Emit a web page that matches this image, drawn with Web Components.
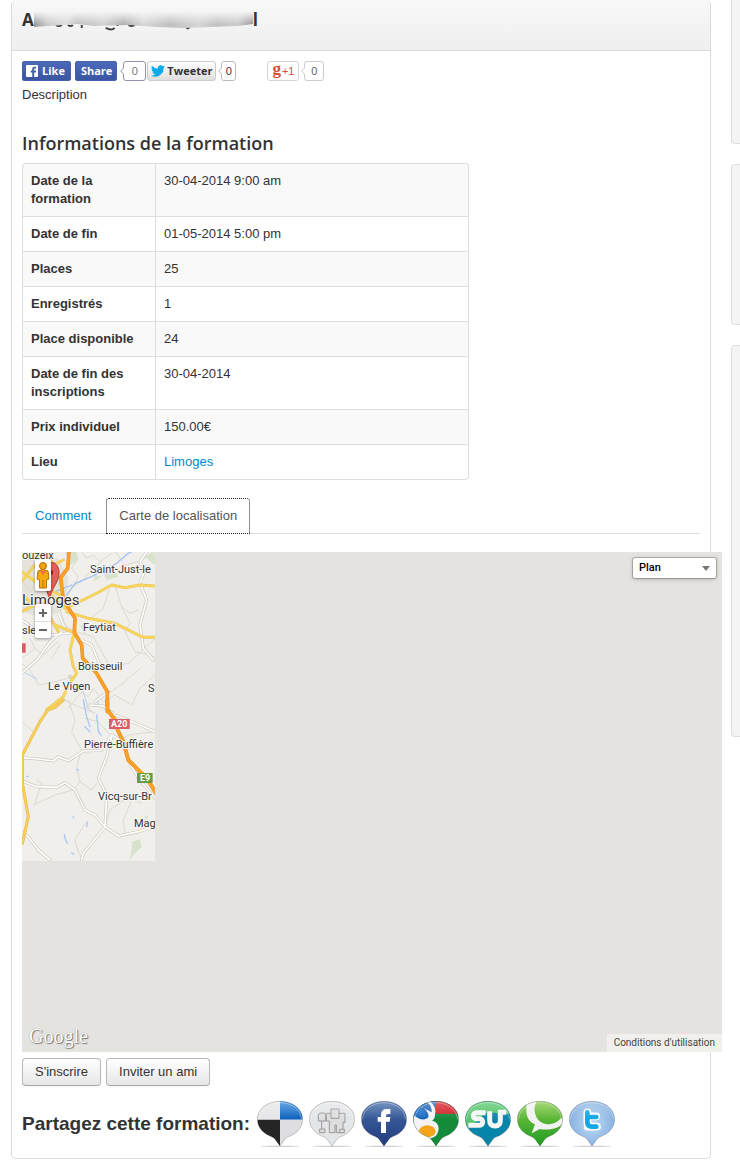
<!DOCTYPE html>
<html lang="fr">
<head>
<meta charset="utf-8">
<meta name="viewport" content="width=device-width">
<title>Formation</title>
<style>
body{margin:0;background:#fff;color:#333;font:13px/18px "Liberation Sans",Arial,sans-serif}
</style>
</head>
<body>
<training-page></training-page>

<script>
const define = (name, html) => customElements.define(name, class extends HTMLElement {
  constructor() {
    super();
    const t = document.createElement('template');
    t.innerHTML = html;
    this.attachShadow({mode: 'open'}).append(t.content.cloneNode(true));
  }
});

/* Bordered panel with a gradient heading bar */
define('content-panel', `
<style>
:host{display:block;min-width:0;box-sizing:border-box;border:1px solid #d8dbdf;border-top:0;border-radius:5px;padding-bottom:11px}
header{height:50px;box-sizing:content-box;border-bottom:1px solid #d8dbdf;background:linear-gradient(#f8f8f8,#efefef);border-radius:5px 5px 0 0;padding:0 10px}
.body{padding:10px 10px 0}
</style>
<header><slot name="heading"></slot></header>
<div class="body"><slot></slot></div>`);

define('redacted-title', `
<style>
:host{display:block}
h1{margin:0;padding-top:8px;display:flex;align-items:center;font:700 17px/24px "Open Sans",sans-serif}
svg{display:block;flex:none}
</style>
<h1>A<svg width="219" height="24" viewBox="0 0 220 24" aria-hidden="true">
<defs><linearGradient id="b"><stop offset="0" stop-color="#999"/><stop offset=".06" stop-color="#ccc"/><stop offset=".15" stop-color="#ddd"/><stop offset=".2" stop-color="#c0c0c0"/><stop offset=".32" stop-color="#d2d2d2"/><stop offset=".41" stop-color="#b0b0b0"/><stop offset=".5" stop-color="#d8d8d8"/><stop offset=".62" stop-color="#c0c0c0"/><stop offset=".75" stop-color="#d4d4d4"/><stop offset=".84" stop-color="#c2c2c2"/><stop offset=".93" stop-color="#ccc"/><stop offset="1" stop-color="#999"/></linearGradient>
<linearGradient id="f" x2="0" y2="1"><stop offset="0" stop-color="#f5f5f5"/><stop offset=".15" stop-color="#f5f5f5"/><stop offset=".9" stop-color="#f5f5f5" stop-opacity="0"/></linearGradient></defs>
<path d="M22 17q3 2 6 0M34 17q3 2 5 0M48 17v3M72 20q6 3 9 0M84 17v1M95 17q3 2 6 0M153 20q2 1 3-1" fill="none" stroke="#444" stroke-width="2"/>
<path d="M0 2H220V16L205 18L150 20L122 19L96 17L60 18L44 16L0 19Z" fill="url(#b)"/><path d="M0 1H220V18H0Z" fill="url(#f)"/>
</svg>l</h1>`);

/* Speech-box counter */
define('share-count', `
<style>
:host{display:inline-flex;align-items:center}
svg{display:block;margin-right:-1px;position:relative}
span{display:block;box-sizing:border-box;height:20px;min-width:var(--w,20px);border:1px solid var(--line,#bbb);border-radius:3px;text-align:center;font:11px/18px "Liberation Sans",sans-serif;background:#fff}
path{stroke:var(--line,#bbb)}
</style>
<svg width="4" height="8" viewBox="0 0 4 8"><path d="M4 .5L.7 4L4 7.5" fill="#fff"/></svg><span><slot></slot></span>`);

define('social-bar', `
<style>
:host{display:flex;height:20px}
button{display:flex;align-items:center;box-sizing:border-box;height:20px;margin:0;border-radius:3px;font:bold 11px/18px "Open Sans",sans-serif;white-space:nowrap}
.fb{border:1px solid #4560ad;background:linear-gradient(#4c69ba,#3b55a0);color:#fff;border-radius:2px;padding:0 5px 0 3px;margin-right:4px;gap:4px}
.fb.s{padding:0 4px 0 5px;margin-right:3px}
.tw{border:1px solid #ccc;background:linear-gradient(#fff,#dedede);color:#333;padding:0 3px;gap:2px;margin:0 2px 0 1px}
.gp{border:1px solid #d4d4d4;background:#fff;color:#dd4b39;padding:0 4px;margin:0 2px 0 31px;gap:1px;font:11px/18px "Liberation Sans",sans-serif;width:32px}
.gp b{font:bold 17px/14px "Liberation Serif",serif;margin-top:-4px}
</style>
<button class="fb"><svg width="12" height="12" viewBox="0 0 12 12"><rect width="12" height="12" rx="1" fill="#fff"/><path d="M6.2 12V7.4H4.7V5.5h1.5V4.2C6.2 2.6 7.1 1.8 8.6 1.8h1.5v1.8H9.2c-.8 0-1 .3-1 1v.9h1.9L9.9 7.4H8.2V12z" fill="#4460ae"/></svg>Like</button>
<button class="fb s">Share</button>
<share-count style="--w:23px;--line:#8f93ad;color:#777">0</share-count>
<button class="tw"><svg width="14" height="12" viewBox="0 0 24 20"><path d="M24 2.4a10 10 0 0 1-2.8.8A5 5 0 0 0 23.300.5a10 10 0 0 1-3.100 1.200A4.900 4.900 0 0 0 11.800 6.200 14 14 0 0 1 1.700 1a5 5 0 0 0 1.500 6.600A5 5 0 0 1 1 7a5 5 0 0 0 4 4.900 5 5 0 0 1-2.300.1 5 5 0 0 0 4.600 3.400A10 10 0 0 1 0 17.500 14 14 0 0 0 21.500 5 10 10 0 0 0 24 2.400z" fill="#0aabe8"/></svg>Tweeter</button>
<share-count style="--w:15px;color:#333">0</share-count>
<button class="gp"><b>g</b>+1</button>
<share-count style="--w:20px;--line:#ccc;color:#666">0</share-count>`);

define('info-table', `
<style>
:host{display:block;width:66%}
table{width:100%;border-collapse:separate;border-spacing:0;border:1px solid #ddd;border-left:0;border-radius:4px;table-layout:fixed}
th,td{padding:8px;border-left:1px solid #ddd;border-top:1px solid #ddd;text-align:left;vertical-align:top;font-size:13px;line-height:18px}
th{width:116px;font-weight:bold}
tr:first-child>*{border-top:0}
tr:nth-child(odd)>*{background:#f9f9f9}
tr:first-child th{border-top-left-radius:4px}tr:first-child td{border-top-right-radius:4px}
tr:last-child th{border-bottom-left-radius:4px}tr:last-child td{border-bottom-right-radius:4px}
a{color:#08c;text-decoration:none}
</style>
<table><tbody>
<tr><th scope="row">Date de la formation</th><td>30-04-2014 9:00 am</td></tr>
<tr><th scope="row">Date de fin</th><td>01-05-2014 5:00 pm</td></tr>
<tr><th scope="row">Places</th><td>25</td></tr>
<tr><th scope="row">Enregistrés</th><td>1</td></tr>
<tr><th scope="row">Place disponible</th><td>24</td></tr>
<tr><th scope="row">Date de fin des inscriptions</th><td>30-04-2014</td></tr>
<tr><th scope="row">Prix individuel</th><td>150.00€</td></tr>
<tr><th scope="row">Lieu</th><td><a href="#limoges">Limoges</a></td></tr>
</tbody></table>`);

define('tab-bar', `
<style>
:host{display:flex;border-bottom:1px solid #ddd}
a{color:#08c;text-decoration:none;padding:8px 12px;border:1px solid transparent;margin:0 2px -1px 0;line-height:18px}
a.on{color:#555;background:#fff;border:1px dotted #222;border-radius:3px 3px 0 0}
</style>
<a href="#comment">Comment</a><a class="on" href="#carte" aria-current="true">Carte de localisation</a>`);

define('location-map', `
<style>
:host{display:block;position:relative;height:500px;background:#e4e3df;font-family:Roboto,sans-serif;overflow:hidden}
.tile{display:block}
.peg,.zoom,.type,.google,.terms{position:absolute}
.peg{left:13px;top:7px;width:16px;height:32px;background:#fff;border-radius:2px;box-shadow:0 1px 3px #0006}
.zoom{left:13px;top:52px;width:16px;background:#fff;border-radius:2px;box-shadow:0 1px 3px #0006}
.zoom button{display:block;width:16px;height:17px;border:0;padding:0;background:none}
.zoom button+button{border-top:1px solid #ddd}
.zoom svg{display:block;margin:auto}
.type{right:6px;top:6px;display:block}
.type svg{position:absolute;right:6px;top:8px;pointer-events:none}
select{appearance:none;box-sizing:border-box;width:83px;height:20px;margin:0;border:0;border-radius:2px;background:#fff;box-shadow:0 0 0 1px #0003,0 1px 4px #0004;padding:0 6px;font:500 11px/20px Roboto,sans-serif;color:#000;display:block}
.google{left:7px;bottom:4px;font:20px/24px "Liberation Serif",serif;color:#fff;text-shadow:1px 1px 1px #777,0 0 1px #888}
.terms{right:0;bottom:0;background:#f1f0ed;padding:0 7px;font-size:10px;line-height:18px;color:#444;text-decoration:none}
</style>
<svg class="tile" width="133" height="309" viewBox="0 0 133 309" fill="none" stroke-linejoin="round" stroke-linecap="round">
<defs>
<g id="minor1"><path d="M165 20L185 45L170 70L190 95L175 125L205 105L230 75L260 50M200 20L215 40L235 30L255 50L290 25M300 20L330 60L370 50L420 20M135 190L150 240L180 260L235 275L260 320L285 365L340 355L420 280M285 125L265 190L225 220M300 120L320 185L345 205L370 195M320 185L345 235L330 260L360 320L420 335M20 355L45 375L70 420L120 410L160 400M20 340L60 310L85 330L130 290M60 310L45 280M160 490L200 440L220 455L235 430L265 470L300 450L350 480L375 430L420 390M275 450L330 410L375 370M30 120L60 150L40 200M80 20L95 50L70 90L105 140L80 180M105 220L60 245M135 300L110 340"/></g>
<g id="minor2"><path d="M160 0L180 60L170 95L200 150L185 200L195 245L175 270M20 65L55 95M60 310L80 250L65 240M55 315L120 285L175 270M195 245L230 270L245 250M210 55L250 65L290 110M420 95L340 105L305 130M270 380L285 330L340 290L380 310M330 405L325 360L350 300M185 440L200 480M190 455L180 420L210 370M150 0L190 20L240 40L210 20"/></g>
</defs>
<rect width="133" height="309" fill="#f0efeb"/>
<g transform="translate(-7 -7) scale(.333333)">
<path d="M20 40H130L160 100L150 190L90 220L20 200Z" fill="#e4e2da"/>
<path d="M150 20L185 20L190 45L165 60ZM265 80L295 70L310 95L275 105ZM195 240L215 250L210 270ZM240 90L260 95L235 110ZM390 35L410 22L420 30V60Z" fill="#d8e3cc"/>
<circle cx="166" cy="396" r="7" fill="#d5d3c9"/>
<use href="#minor1" stroke="#dcd9cf" stroke-width="3"/>
<path d="M155 150L180 115L230 95L265 75L305 55L340 25L350 20M170 120L120 140" stroke="#a3c1f5" stroke-width="4"/>
<path d="M25 380L65 402M205 440L220 490M245 460L250 480" stroke="#b9d0f5" stroke-width="3"/>
<path d="M395 20L375 50L390 75L375 115L395 165L375 240L385 310L415 345M130 205L150 250L190 280L230 300L255 360M20 385L70 340L105 290L140 260M20 225L70 260L110 270L175 262M240 470L280 440" stroke="#cbc7bb" stroke-width="9"/><path d="M395 20L375 50L390 75L375 115L395 165L375 240L385 310L415 345M130 205L150 250L190 280L230 300L255 360M20 385L70 340L105 290L140 260M20 225L70 260L110 270L175 262M240 470L280 440" stroke="#fff" stroke-width="5"/>
<path d="M150 190L235 150L290 120L330 128L375 120L420 123M155 200L220 220L300 235L360 265L385 277H420M180 255L165 315L175 365L185 385L160 420L145 455L95 495M50 20L105 65L145 45M20 80L75 120L135 150M20 150L70 190L120 240L175 262M100 20L115 85L105 150L150 185M20 110L60 60L110 45M20 200L70 175L105 215L130 260" stroke="#e3c868" stroke-width="9"/>
<path d="M150 190L235 150L290 120L330 128L375 120L420 123M155 200L220 220L300 235L360 265L385 277H420M180 255L165 315L175 365L185 385L160 420L145 455L95 495M50 20L105 65L145 45M20 80L75 120L135 150M20 150L70 190L120 240L175 262M100 20L115 85L105 150L150 185M20 110L60 60L110 45M20 200L70 175L105 215L130 260" stroke="#fbd55a" stroke-width="6"/>
<path d="M162 20L158 70L137 98L145 165L180 220L178 262L200 300L203 340L245 385L277 440V500" stroke="#e98d20" stroke-width="11"/><path d="M162 20L158 70L137 98L145 165L180 220L178 262L200 300L203 340L245 385L277 440V500" stroke="#faa126" stroke-width="8"/>
<path d="M105 52C125 48 136 72 131 95C126 118 109 130 103 165C98 130 75 110 78 80C80 62 91 54 105 52Z" fill="#e85d56" stroke="#b43a34" stroke-width="3"/><circle cx="106" cy="82" r="8" fill="#7a2825"/>
<path d="M18 295H32V323H18Z" fill="#d95b60"/>
</g>
<g transform="translate(-7 148) scale(.333333)">
<use href="#minor2" stroke="#dcd9cf" stroke-width="3"/>
<path d="M205 0L215 50L225 80M245 45L250 95L258 105M210 80L225 95M185 208L190 211M35 229H40M175 350V353M217 365L215 380M148 403L150 415L157 430M170 458L176 463" stroke="#a8c7fa" stroke-width="4"/>
<path d="M352 425L375 418L380 440L355 465L345 480L350 445ZM385 345L400 350L395 360Z" fill="#d6e2cb"/>
<path d="M20 173L70 177L115 183L130 171L160 182L205 153L258 151L290 105L325 125M290 110L275 170L250 235L275 285L270 380M200 480L205 460L270 380M20 242L65 260L125 262L150 248L180 270L210 330L240 345L270 380L310 408L370 395L420 380M20 395L40 410L70 450L105 480M225 15L265 18L300 45L340 60L420 95M345 190L370 235L420 295" stroke="#cbc7bb" stroke-width="9"/>
<path d="M20 173L70 177L115 183L130 171L160 182L205 153L258 151L290 105L325 125M290 110L275 170L250 235L275 285L270 380M200 480L205 460L270 380M20 242L65 260L125 262L150 248L180 270L210 330L240 345L270 380L310 408L370 395L420 380M20 395L40 410L70 450L105 480M225 15L265 18L300 45L340 60L420 95M345 190L370 235L420 295" stroke="#fff" stroke-width="5"/>
<path d="M145 0L120 22L98 30L75 65L22 165V250L40 350L22 430" stroke="#dfb54a" stroke-width="9"/><path d="M145 0L120 22L98 30L75 65L22 165V250L40 350L22 430" stroke="#fbd05a" stroke-width="6"/>
<path d="M277 0V28L300 60L308 90L325 125L340 180L380 220L405 250L422 278" stroke="#e98d20" stroke-width="12"/><path d="M277 0V28L300 60L308 90L325 125L340 180L380 220L405 250L422 278" stroke="#faa126" stroke-width="9"/>
<path d="M282 57H344V87H282Z" fill="#d95b66"/><path d="M366 219H413V249H366Z" fill="#6a9c3d"/>
</g>
<g font-size="11" fill="#333" stroke="#f8f7f3" stroke-width="2" paint-order="stroke">
<text x="0" y="7">ouzeix</text><text x="68" y="21">Saint-Just-le</text><text x="0" y="53" font-size="15">Limoges</text><text x="0" y="82">sle</text><text x="61" y="79">Feytiat</text><text x="56" y="118">Boisseuil</text><text x="26" y="138">Le Vigen</text><text x="126" y="140">S</text><text x="62" y="196">Pierre-Buffière</text><text x="76" y="248">Vicq-sur-Br</text><text x="112" y="275">Mag</text>
</g>
<g font-size="9" font-weight="700" fill="#fff"><text x="89" y="175">A20</text><text x="118" y="229">E9</text></g>
</svg>
<div class="peg"><svg width="16" height="32" viewBox="0 0 16 32"><circle cx="8" cy="7" r="3.500" fill="#f0a30e" stroke="#b36b00"/><path d="M3 12Q8 9 13 12L14 20L11.500 21V29H4.500V21L2 20Z" fill="#f4a90f" stroke="#b97000"/><path d="M5 12H11L8 16Z" fill="#ed6b50"/><path d="M8 21V29" stroke="#b97000"/></svg></div>
<div class="zoom"><button aria-label="Zoom avant"><svg width="8" height="8"><path d="M0 4H8M4 0V8" stroke="#666" stroke-width="2"/></svg></button><button aria-label="Zoom arrière"><svg width="8" height="8"><path d="M0 4H8" stroke="#666" stroke-width="2"/></svg></button></div>
<label class="type"><select aria-label="Type de carte"><option>Plan</option></select><svg width="8" height="5"><path d="M0 0H8L4 5Z" fill="#777"/></svg></label>
<span class="google">Google</span>
<a class="terms" href="#conditions">Conditions d'utilisation</a>`);

define('action-button', `
<style>
:host{display:block}
button{display:block;margin:0;font:13px/18px "Liberation Sans",Arial,sans-serif;color:#333;padding:4px 12px;border:1px solid #b8b8b8;border-bottom-color:#a8a8a8;border-radius:4px;background:linear-gradient(#fff,#e6e6e6);box-shadow:0 1px 2px #0000000d}
</style><button><slot></slot></button>`);

/* Round pins, clipped to the bubble outline */
const PIN = 'M69 1C108 1 137 25 137 55C137 83 114 101 92 108Q85 111 80 120L69 135L58 120Q53 111 46 108C24 101 1 83 1 55C1 25 30 1 69 1Z';
const ART = {
  Delicious: '<path d="M0 0H69V56H0Z" fill="#e6e6e8"/><path d="M69 0H138V56H69Z" fill="url(#blue)"/><path d="M0 56H69V138H0Z" fill="#252525"/><path d="M69 56H138V138H69Z" fill="#dedee0"/>',
  Digg: '<path d="M0 0H138V138H0Z" fill="#e4e5e7"/><g fill="#dedede" stroke="#999" stroke-width="3"><path d="M38 60V92M30 92H47M92 60V92"/><path d="M28 54V42Q29 36 36 36H44Q50 36 50 42V60H28Z"/><path d="M52 37H108V64H102V95H82V72H78V95H61V60H52Z"/><path d="M66 24H90V52H66Z"/><path d="M92 85H106V95H92ZM32 84H48V95H32Z"/></g>',
  Facebook: '<path d="M0 0H138V138H0Z" fill="url(#fb)"/><path d="M60 96V62H50V48H60V41Q60 24 78 24H88V39H81Q75 39 75 44V48H88L86 62H75V96Z" fill="#fff"/>',
  Google: '<path d="M0 0H138V138H0Z" fill="#148b3b"/><path d="M55 0H138V38H65Z" fill="#d32027"/><path d="M0 0H70L66 50L0 70Z" fill="#1c64b7"/><path d="M0 70L50 59C75 57 85 82 69 104C50 119 20 116 5 93Z" fill="#f3f3f3"/><path d="M18 14C34 18 50 36 46 49C34 62 14 52 4 44L0 54L0 80Q26 68 50 64Q66 58 66 42Q72 18 50 0L40 2Q58 14 56 34Z" fill="#f3f3f3"/><path d="M10 24Q22 18 34 32Q42 44 34 48Q22 50 6 38Z" fill="#2070c5"/><ellipse cx="43" cy="91" rx="25" ry="18" fill="#f3a51b"/>',
  StumbleUpon: '<path d="M0 0H138V138H0Z" fill="#0784aa"/><path d="M0 0H138V38H100L90 35L60 36L20 76H0Z" fill="#58c66e"/><path d="M62 35H34C22 35 22 53 34 53H44C56 53 56 73 44 73H10M74 31V57Q74 75 90 75Q106 75 106 57V34H124" fill="none" stroke="#f4f6f5" stroke-width="15"/>',
  Technorati: '<path d="M0 0H138V138H0Z" fill="url(#green)"/><path d="M30 0C24 40 30 60 54 70L44 97L68 84C104 90 137 78 140 58L132 52C112 77 73 76 58 48Q46 22 60 0Z" fill="#f2f2f2"/>',
  Twitter: '<path d="M0 0H138V138H0Z" fill="url(#sky)"/><path d="M55 34V63Q55 77 68 77H84M56 46H82M56 77H82" fill="none" stroke="#fff" stroke-width="23" stroke-linecap="round"/><path d="M55 34V63Q55 77 68 77H82M56 48H82" fill="none" stroke="#13a6e6" stroke-width="14" stroke-linecap="round"/>'
};
define('share-pins', `
<style>:host{display:flex;gap:6px}a{display:block}svg{display:block}</style>` +
Object.entries(ART).map(([name, art]) => `<a href="#${name}" aria-label="${name}"><svg width="46" height="46" viewBox="0 0 138 138">
<defs><clipPath id="pin"><path d="${PIN}"/></clipPath>
<linearGradient id="blue" x2="0" y2="1"><stop stop-color="#2f87dc"/><stop offset="1" stop-color="#0a5fb8"/></linearGradient>
<linearGradient id="fb" x2="0" y2="1"><stop stop-color="#426aa8"/><stop offset="1" stop-color="#213a7c"/></linearGradient>
<linearGradient id="green" x2="0" y2="1"><stop stop-color="#83c744"/><stop offset="1" stop-color="#1b9b22"/></linearGradient>
<radialGradient id="sky"><stop stop-color="#c0dbf5"/><stop offset="1" stop-color="#85b1e0"/></radialGradient>
<linearGradient id="gloss" x2="0" y2="1"><stop stop-color="#fff" stop-opacity=".28"/><stop offset="1" stop-color="#fff" stop-opacity="0"/></linearGradient></defs>
<ellipse cx="69" cy="136" rx="58" ry="2" fill="#bbb" opacity=".7"/>
<g clip-path="url(#pin)">${art}<path d="M0 0H138V55H0Z" fill="url(#gloss)"/></g>
<path d="${PIN}" fill="none" stroke="#000" stroke-opacity=".3" stroke-width="2"/>
<path d="M5 55C5 28 32 5 69 5S133 28 133 55" fill="none" stroke="#fff" stroke-opacity=".5" stroke-width="2"/>
</svg></a>`).join(''));

define('side-rail', `
<style>
:host{display:flex;flex-direction:column;gap:20px;min-width:0}
div{box-sizing:border-box;border:1px solid #dfdfdf;border-right:0;border-radius:4px 0 0 4px;background:#f4f4f4;min-height:161px}
div:first-of-type{border-top:0;border-top-left-radius:0;min-height:144px}
div:last-of-type{min-height:392px}
</style><div></div><div></div><div></div>`);

define('training-page', `
<style>
:host{display:grid;grid-template-columns:minmax(0,1fr) 9px;column-gap:20px;padding:0 0 5px 11px}
p{margin:5px 0 0}
h3{margin:26px 0 6px;font:600 18px/27px "Open Sans",sans-serif}
tab-bar{margin:18px 0}
location-map{margin-right:-22px}
.actions{display:flex;gap:5px;margin:6px 0 15px}
.share{display:flex;align-items:flex-start;gap:7px}
h2{margin:0;font:bold 19px/46px "Liberation Sans",sans-serif;white-space:nowrap}
</style>
<content-panel>
<redacted-title slot="heading"></redacted-title>
<social-bar></social-bar>
<p>Description</p>
<h3>Informations de la formation</h3>
<info-table></info-table>
<tab-bar></tab-bar>
<location-map></location-map>
<div class="actions"><action-button>S'inscrire</action-button><action-button>Inviter un ami</action-button></div>
<div class="share"><h2>Partagez cette formation:</h2><share-pins></share-pins></div>
</content-panel>
<side-rail></side-rail>`);
</script>
</body>
</html>
